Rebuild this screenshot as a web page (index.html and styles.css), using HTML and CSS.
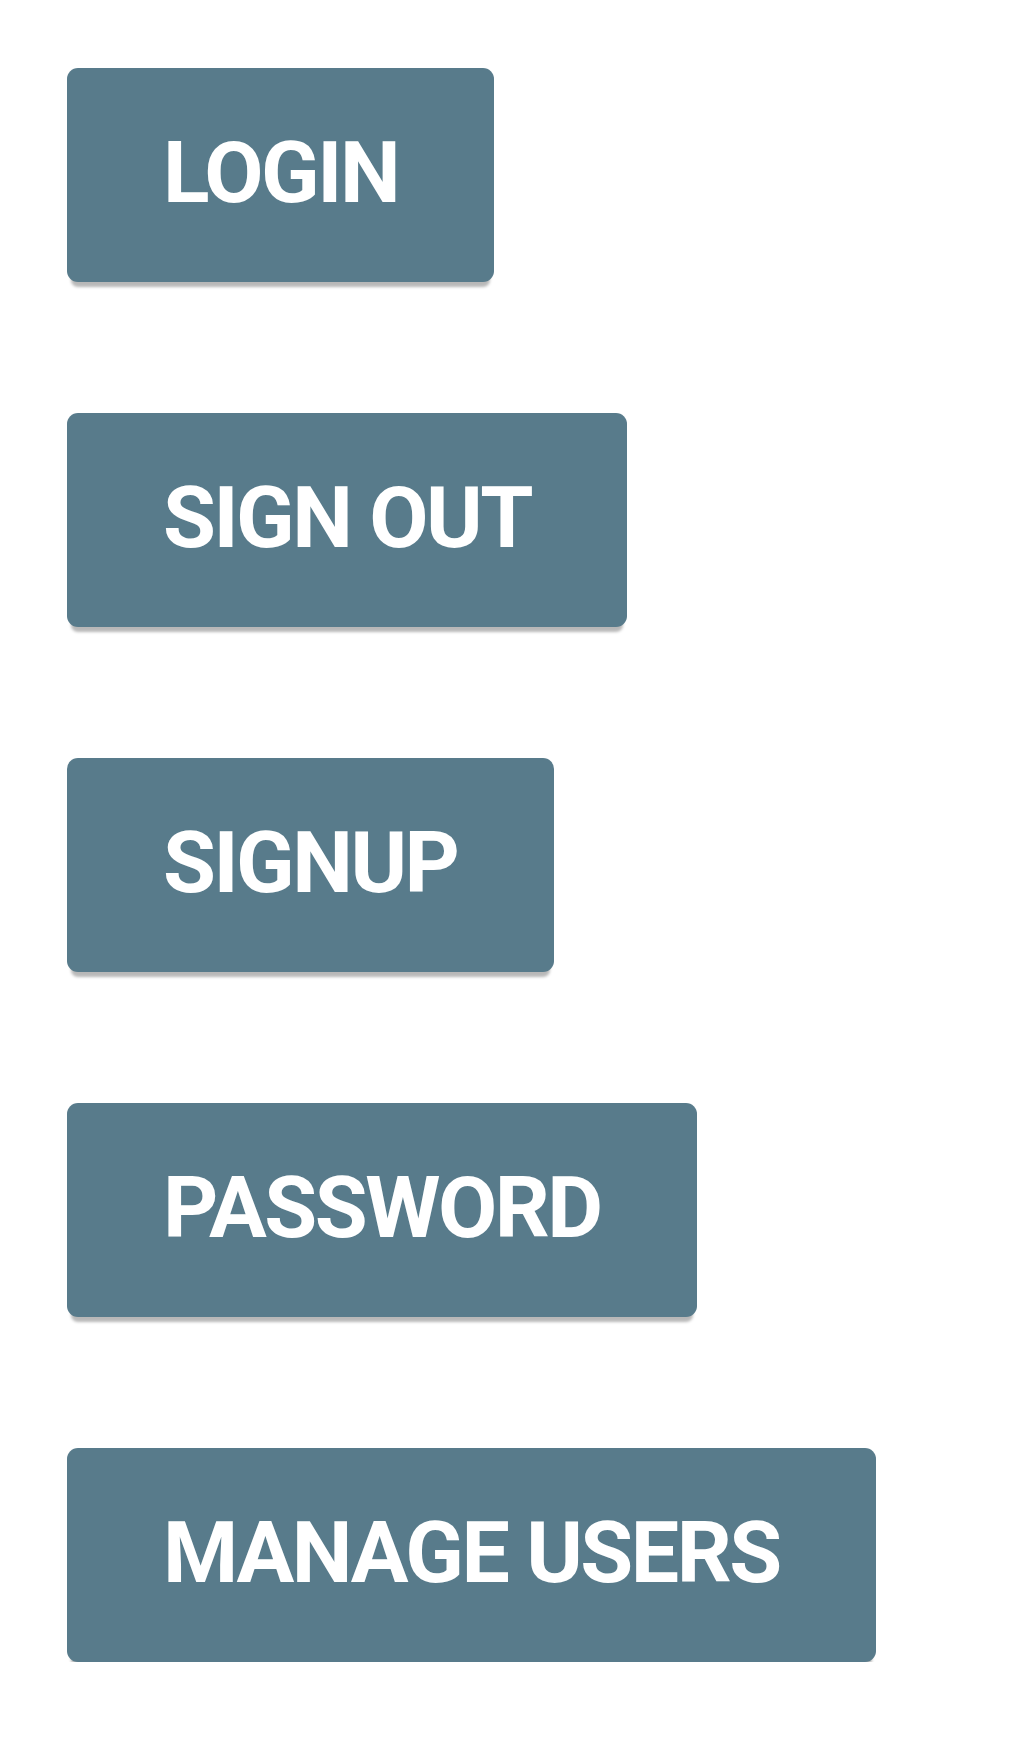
FILE: index.html
```html
<!DOCTYPE html>
<html lang="en">
<head>
    <meta charset="UTF-8">
    <meta name="viewport" content="width=device-width, initial-scale=1.0">
    <title>Account Actions</title>
    <link rel="stylesheet" href="styles.css">
</head>
<body>
    <div class="actions">
        <button class="action-btn">LOGIN</button>
        <button class="action-btn">SIGN OUT</button>
        <button class="action-btn">SIGNUP</button>
        <button class="action-btn">PASSWORD</button>
        <button class="action-btn">MANAGE USERS</button>
    </div>
</body>
</html>
```

FILE: styles.css
```css
body {
    margin: 0;
    background-color: #ffffff;
    font-family: Roboto, "Liberation Sans", sans-serif;
}
.actions {
    display: flex;
    flex-direction: column;
    align-items: flex-start;
    gap: 131px; /* space between the buttons */
    padding: 68px 0 0 67px;
}
.action-btn {
    box-sizing: border-box;
    height: 214px;
    padding: 0 96px 4px 96px; /* bottom padding lifts the label a little */
    border: none;
    border-radius: 11px;
    background-color: #587b8b; /* slate blue-grey */
    color: #ffffff;
    font-family: Roboto, "Liberation Sans", sans-serif;
    font-weight: 700;
    font-size: 86px;
    line-height: 210px;
    letter-spacing: -2.5px;
    box-shadow: 0 9px 3px -4px rgba(0, 0, 0, 0.28);
    cursor: pointer;
}
```
